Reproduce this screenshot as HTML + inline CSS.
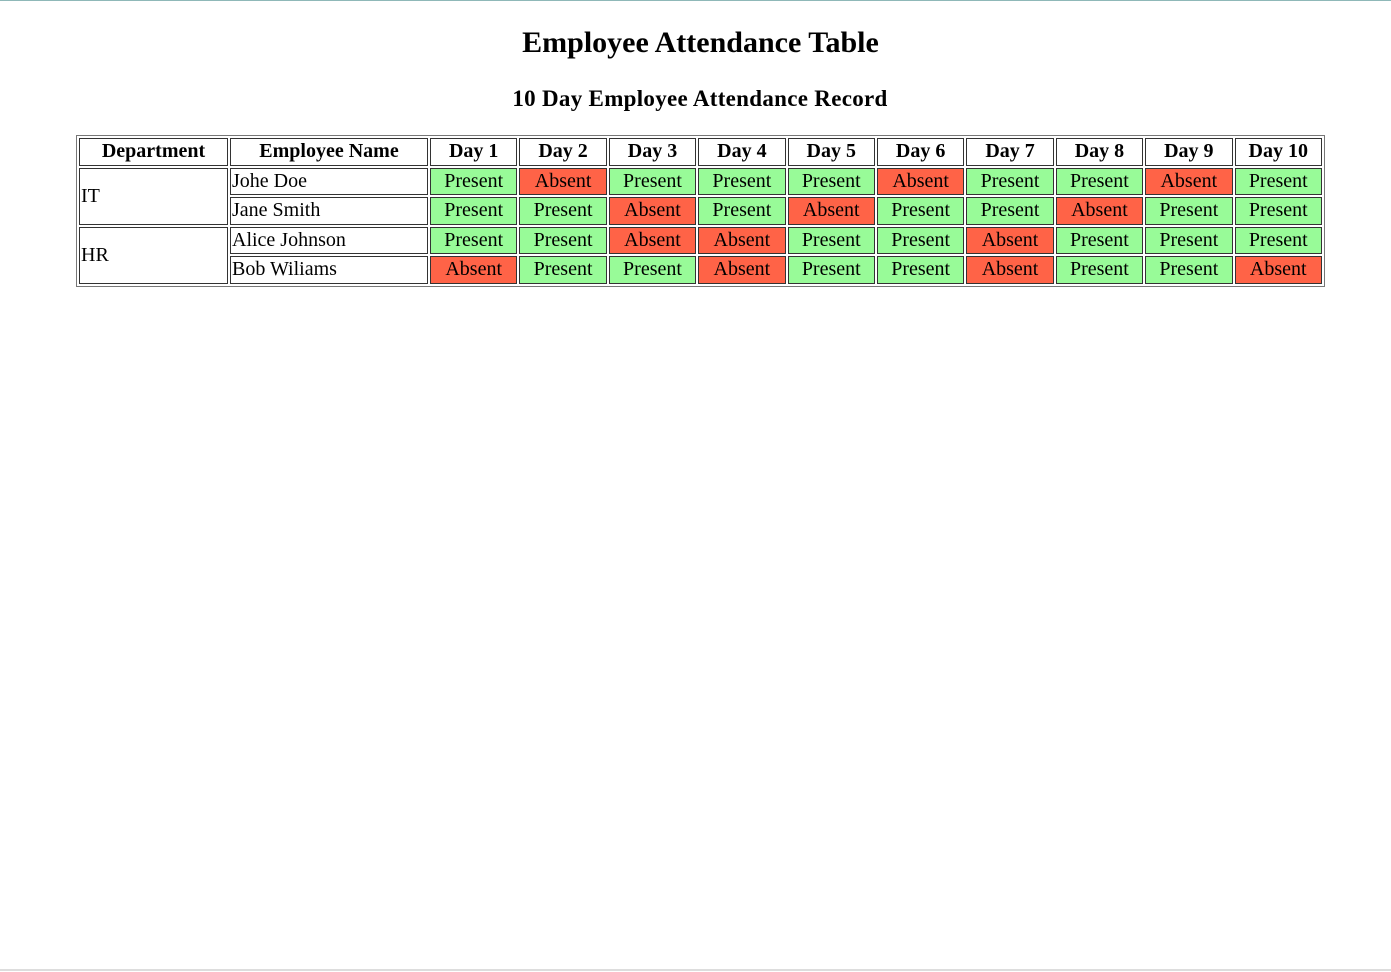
<!DOCTYPE html>
<html><head><style>
html,body{margin:0;padding:0;width:1391px;height:972px;overflow:hidden;background:#fff;font-family:"Liberation Serif",serif;}
.top{position:absolute;left:0;top:0;width:1391px;height:1px;background:#8fb8b8;}
.bot{position:absolute;left:0;top:969px;width:1391px;height:2px;background:#ddd;}
h1{position:absolute;top:25px;left:0;width:1401px;text-align:center;margin:0;font-size:30px;line-height:36px;}
h2{position:absolute;top:85px;left:0;width:1400px;text-align:center;margin:0;font-size:23px;line-height:28px;letter-spacing:0.3px;}
table{position:absolute;left:76px;top:135px;width:1249px;border:1px solid #777;border-spacing:2px;font-size:20px;table-layout:fixed;}
td,th{border:1px solid #333;padding:0 1px;height:25.5px;line-height:23px;text-align:center;}
th{font-weight:bold;}
td.l{text-align:left;}
.p{background:#98fb98;}
.a{background:#ff6347;}
</style></head><body>
<div class="top"></div>
<h1>Employee Attendance Table</h1>
<h2>10 Day Employee Attendance Record</h2>
<table>
<colgroup><col style="width:149px"><col style="width:198px"><col><col><col><col><col><col><col><col><col><col></colgroup>
<tr><th>Department</th><th>Employee Name</th><th>Day 1</th><th>Day 2</th><th>Day 3</th><th>Day 4</th><th>Day 5</th><th>Day 6</th><th>Day 7</th><th>Day 8</th><th>Day 9</th><th>Day 10</th></tr>
<tr><td class="l" rowspan="2">IT</td><td class="l">Johe Doe</td><td class="p">Present</td><td class="a">Absent</td><td class="p">Present</td><td class="p">Present</td><td class="p">Present</td><td class="a">Absent</td><td class="p">Present</td><td class="p">Present</td><td class="a">Absent</td><td class="p">Present</td></tr>
<tr><td class="l">Jane Smith</td><td class="p">Present</td><td class="p">Present</td><td class="a">Absent</td><td class="p">Present</td><td class="a">Absent</td><td class="p">Present</td><td class="p">Present</td><td class="a">Absent</td><td class="p">Present</td><td class="p">Present</td></tr>
<tr><td class="l" rowspan="2">HR</td><td class="l">Alice Johnson</td><td class="p">Present</td><td class="p">Present</td><td class="a">Absent</td><td class="a">Absent</td><td class="p">Present</td><td class="p">Present</td><td class="a">Absent</td><td class="p">Present</td><td class="p">Present</td><td class="p">Present</td></tr>
<tr><td class="l">Bob Wiliams</td><td class="a">Absent</td><td class="p">Present</td><td class="p">Present</td><td class="a">Absent</td><td class="p">Present</td><td class="p">Present</td><td class="a">Absent</td><td class="p">Present</td><td class="p">Present</td><td class="a">Absent</td></tr>
</table>
<div class="bot"></div>
</body></html>
